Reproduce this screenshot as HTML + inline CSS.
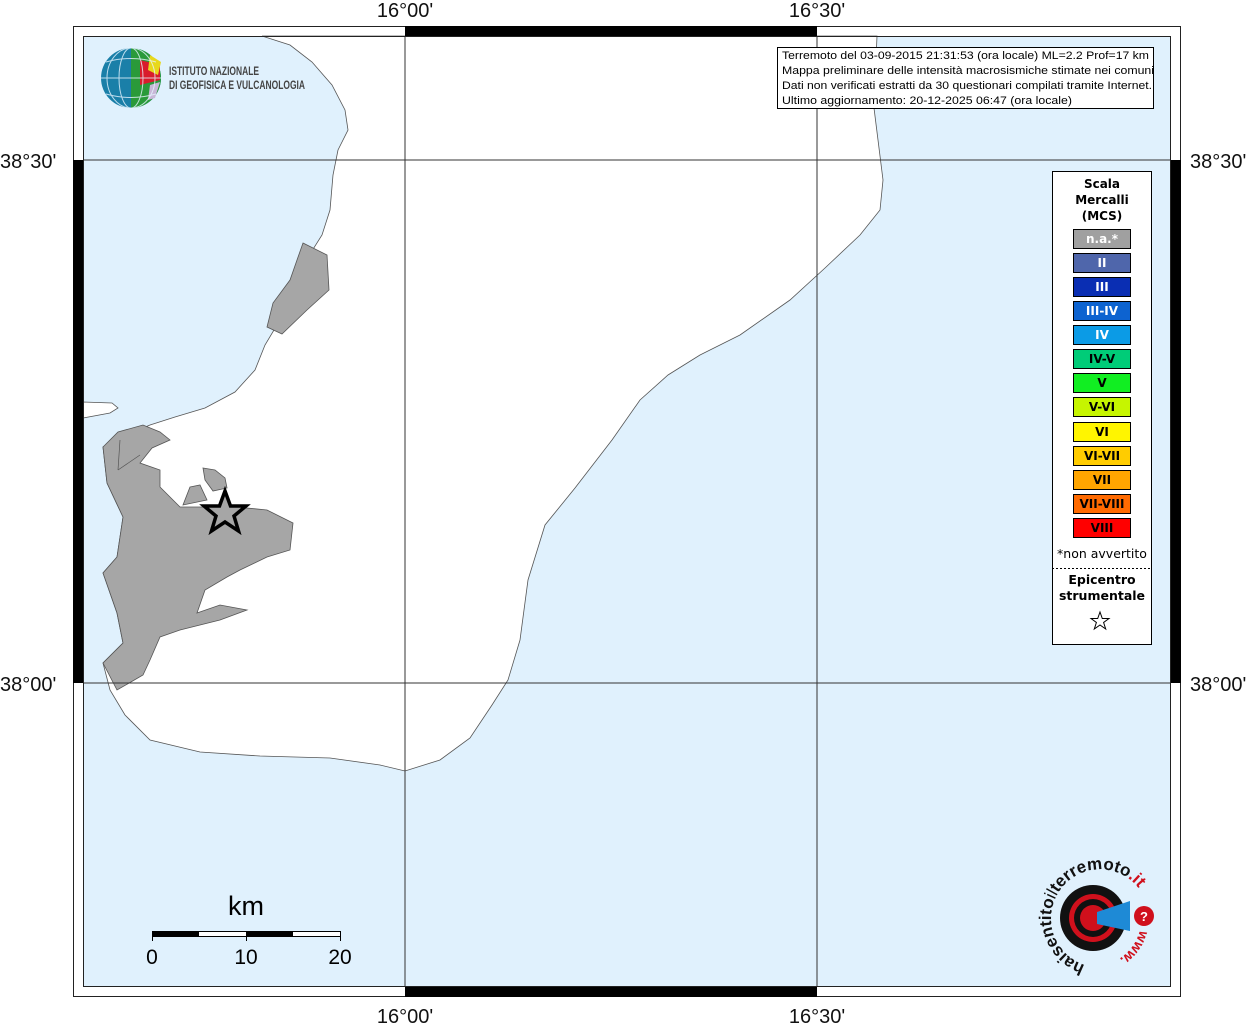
<!DOCTYPE html>
<html><head><meta charset="utf-8"><style>
html,body{margin:0;padding:0;background:#fff;width:1254px;height:1024px;overflow:hidden}
svg{display:block}
</style></head><body>
<svg width="1254" height="1024" viewBox="0 0 1254 1024" xmlns="http://www.w3.org/2000/svg" font-family="Liberation Sans, sans-serif">
<rect x="0" y="0" width="1254" height="1024" fill="#fff"/>
<rect x="83" y="36" width="1088" height="951" fill="#e0f1fd"/>
<!-- main land -->
<path d="M262,36 L290,45 L312,62 L332,85 L345,110 L348,130 L338,150 L333,175 L330,210 L322,235 L305,262 L292,290 L280,320 L265,345 L255,370 L235,392 L205,408 L175,417 L150,425 L120,438 L103,447 L107,483 L123,517 L117,557 L103,573 L117,613 L123,643 L103,663 L110,690 L125,715 L150,740 L200,752 L260,756 L330,758 L380,765 L405,771 L440,760 L470,738 L492,705 L508,680 L520,640 L528,580 L545,525 L575,488 L612,440 L640,400 L668,375 L700,355 L740,335 L790,300 L825,268 L860,235 L880,210 L883,180 L878,140 L873,100 L876,60 L877,36 Z" fill="#fff" stroke="#555" stroke-width="0.8"/>
<path d="M83,402 L112,403 L118,408 L110,413 L83,418 Z" fill="#fff" stroke="#555" stroke-width="0.8"/>
<!-- gray areas -->
<path d="M103,447 L118,432 L143,425 L160,432 L170,440 L152,448 L140,463 L160,470 L160,487 L180,507 L203,507 L247,508 L267,510 L293,523 L290,550 L267,557 L240,570 L227,577 L205,590 L197,613 L220,605 L247,610 L220,620 L180,630 L160,637 L150,660 L143,675 L117,690 L103,663 L123,643 L117,613 L103,573 L117,557 L123,517 L107,483 Z" fill="#a6a6a6" stroke="#555" stroke-width="0.8"/>
<path d="M203,468 L215,470 L225,478 L227,488 L213,491 L205,480 Z" fill="#a6a6a6" stroke="#555" stroke-width="0.8"/>
<path d="M190,487 L200,485 L207,500 L183,505 Z" fill="#a6a6a6" stroke="#555" stroke-width="0.8"/>
<path d="M303,243 L327,255 L329,290 L307,310 L282,334 L267,327 L273,303 L290,280 L297,260 Z" fill="#a6a6a6" stroke="#555" stroke-width="0.8"/>
<path d="M120,440 L118,470 M140,455 L118,470" stroke="#555" stroke-width="0.7" fill="none"/>
<!-- grid -->
<g stroke="#333" stroke-width="1">
<line x1="405" y1="36" x2="405" y2="987"/><line x1="817" y1="36" x2="817" y2="987"/>
<line x1="83" y1="160" x2="1171" y2="160"/><line x1="83" y1="683" x2="1171" y2="683"/>
</g>
<!-- frame -->
<rect x="73.5" y="26.5" width="1107" height="970" fill="none" stroke="#222" stroke-width="1"/>
<rect x="83.5" y="36.5" width="1087" height="950" fill="none" stroke="#222" stroke-width="1"/>
<g fill="#000">
<rect x="405" y="26" width="412" height="10"/><rect x="405" y="987" width="412" height="10"/>
<rect x="73" y="160" width="10" height="523"/><rect x="1171" y="160" width="10" height="523"/>
</g>
<g font-size="20" fill="#111">
<text x="405" y="17" text-anchor="middle">16°00'</text>
<text x="817" y="17" text-anchor="middle">16°30'</text>
<text x="405" y="1023" text-anchor="middle">16°00'</text>
<text x="817" y="1023" text-anchor="middle">16°30'</text>
<text x="0" y="168">38°30'</text>
<text x="0" y="691">38°00'</text>
<text x="1190" y="168">38°30'</text>
<text x="1190" y="691">38°00'</text>
</g>
<!-- star -->
<path d="M225,491 L230.5,506 L246,506 L234,516 L238.5,531 L225,522 L211.5,531 L216,516 L204,506 L219.5,506 Z" fill="#a6a6a6" stroke="#000" stroke-width="3.5" stroke-linejoin="miter"/>
<!-- INGV logo -->
<circle cx="131" cy="78" r="30" fill="#1a7fa8"/>
<path d="M131,48 A30,30 0 0 1 161,78 A30,30 0 0 1 131,108 Z" fill="#2a9a3a"/>
<path d="M140,60 L160,65 L160,80 L140,85 Z" fill="#d91c2c"/>
<path d="M150,55 L161,62 L158,75 L148,70 Z" fill="#e8d81c"/>
<path d="M150,85 L160,82 L155,98 L148,100 Z" fill="#c8b8d8"/>
<g stroke="#e6f4ff" stroke-width="1" fill="none" opacity="0.8">
<ellipse cx="131" cy="78" rx="12" ry="30"/><ellipse cx="131" cy="78" rx="24" ry="30"/>
<line x1="101" y1="78" x2="161" y2="78"/><path d="M106,62 Q131,55 156,62"/><path d="M106,94 Q131,101 156,94"/>
</g>
<g font-size="12" fill="#444" font-weight="bold">
<text x="169" y="75" textLength="90" lengthAdjust="spacingAndGlyphs">ISTITUTO NAZIONALE</text>
<text x="169" y="89" textLength="136" lengthAdjust="spacingAndGlyphs">DI GEOFISICA E VULCANOLOGIA</text>
</g>
<!-- info box -->
<rect x="777.5" y="47.5" width="376" height="61" fill="#fff" stroke="#000"/>
<g font-size="11" fill="#000" lengthAdjust="spacingAndGlyphs">
<text x="782" y="59" textLength="367" lengthAdjust="spacingAndGlyphs">Terremoto del 03-09-2015 21:31:53 (ora locale) ML=2.2 Prof=17 km</text>
<text x="782" y="74" textLength="372" lengthAdjust="spacingAndGlyphs">Mappa preliminare delle intensità macrosismiche stimate nei comuni</text>
<text x="782" y="89" textLength="370" lengthAdjust="spacingAndGlyphs">Dati non verificati estratti da 30 questionari compilati tramite Internet.</text>
<text x="782" y="104" textLength="290" lengthAdjust="spacingAndGlyphs">Ultimo aggiornamento: 20-12-2025 06:47 (ora locale)</text>
</g>
<!-- legend -->
<rect x="1052.5" y="171.5" width="99" height="473" fill="#fff" stroke="#000"/>
<g font-family="DejaVu Sans, sans-serif" font-weight="bold" font-size="12" text-anchor="middle" fill="#000">
<text x="1102" y="188">Scala</text><text x="1102" y="204">Mercalli</text><text x="1102" y="220">(MCS)</text>
</g>
<g font-family="DejaVu Sans, sans-serif" font-weight="bold" font-size="11.5" text-anchor="middle" stroke="#000" stroke-width="1">
<rect x="1073.5" y="229.5" width="57" height="19" fill="#a0a0a0"/>
<rect x="1073.5" y="253.5" width="57" height="19" fill="#4f66ab"/>
<rect x="1073.5" y="277.5" width="57" height="19" fill="#0a2eb3"/>
<rect x="1073.5" y="301.5" width="57" height="19" fill="#0d63d0"/>
<rect x="1073.5" y="325.5" width="57" height="19" fill="#0b9be6"/>
<rect x="1073.5" y="349.5" width="57" height="19" fill="#00cc78"/>
<rect x="1073.5" y="373.5" width="57" height="19" fill="#11ee22"/>
<rect x="1073.5" y="397.5" width="57" height="19" fill="#c6f500"/>
<rect x="1073.5" y="422.5" width="57" height="19" fill="#fff500"/>
<rect x="1073.5" y="446.5" width="57" height="19" fill="#ffcc00"/>
<rect x="1073.5" y="470.5" width="57" height="19" fill="#ffa500"/>
<rect x="1073.5" y="494.5" width="57" height="19" fill="#ff6a00"/>
<rect x="1073.5" y="518.5" width="57" height="19" fill="#ff0000"/>
</g>
<g font-family="DejaVu Sans, sans-serif" font-weight="bold" font-size="12" text-anchor="middle">
<text x="1102" y="243" fill="#fff">n.a.*</text>
<text x="1102" y="267" fill="#fff">II</text>
<text x="1102" y="291" fill="#fff">III</text>
<text x="1102" y="315" fill="#fff">III-IV</text>
<text x="1102" y="339" fill="#fff">IV</text>
<text x="1102" y="363" fill="#000">IV-V</text>
<text x="1102" y="387" fill="#000">V</text>
<text x="1102" y="411" fill="#000">V-VI</text>
<text x="1102" y="436" fill="#000">VI</text>
<text x="1102" y="460" fill="#000">VI-VII</text>
<text x="1102" y="484" fill="#000">VII</text>
<text x="1102" y="508" fill="#000">VII-VIII</text>
<text x="1102" y="532" fill="#000">VIII</text>
<text x="1102" y="558" font-weight="normal" font-size="12.5">*non avvertito</text>
<text x="1102" y="584" font-size="12.5">Epicentro</text>
<text x="1102" y="600" font-size="12.5">strumentale</text>
</g>
<line x1="1052" y1="568.5" x2="1151" y2="568.5" stroke="#000" stroke-dasharray="2,2"/>
<path d="M1100,612 L1102.3,618.5 L1109,618.5 L1103.6,622.5 L1105.7,629 L1100,625 L1094.3,629 L1096.4,622.5 L1091,618.5 L1097.7,618.5 Z" fill="#fff" stroke="#000" stroke-width="1"/>
<!-- scale bar -->
<text x="246" y="915" font-size="27" text-anchor="middle" fill="#000">km</text>
<rect x="152.5" y="931.5" width="188" height="5" fill="#fff" stroke="#000"/>
<rect x="152" y="931" width="47" height="6" fill="#000"/>
<rect x="246" y="931" width="47" height="6" fill="#000"/>
<line x1="152.5" y1="931" x2="152.5" y2="941" stroke="#000"/><line x1="246.5" y1="931" x2="246.5" y2="941" stroke="#000"/><line x1="340.5" y1="931" x2="340.5" y2="941" stroke="#000"/>
<g font-size="21" text-anchor="middle" fill="#000">
<text x="152" y="964">0</text><text x="246" y="964">10</text><text x="340" y="964">20</text>
</g>
<!-- haisentito logo -->
<defs><path id="arc" d="M1085,965 A49,49 0 1 1 1140,890"/>
<path id="arc2" d="M1140,930 A49,49 0 0 1 1100,966"/></defs>
<circle cx="1093" cy="918" r="33" fill="#111"/>
<circle cx="1093" cy="918" r="24" fill="#d0101c"/>
<circle cx="1093" cy="918" r="19" fill="#111"/>
<circle cx="1093" cy="918" r="13" fill="#d0101c"/>
<path d="M1097,912 L1130,901 L1130,931 L1097,924 Z" fill="#1e8ad6"/>
<circle cx="1144" cy="916" r="10" fill="#d0101c"/>
<text x="1144" y="921" font-size="13" fill="#fff" text-anchor="middle" font-weight="bold">?</text>
<text font-size="17" fill="#111" font-weight="bold"><textPath href="#arc">haisentito<tspan font-weight="normal">il</tspan>terremoto<tspan fill="#d0101c">.it</tspan></textPath></text>
<text font-size="14" fill="#d0101c" font-weight="bold"><textPath href="#arc2">www.</textPath></text>
</svg>
</body></html>
